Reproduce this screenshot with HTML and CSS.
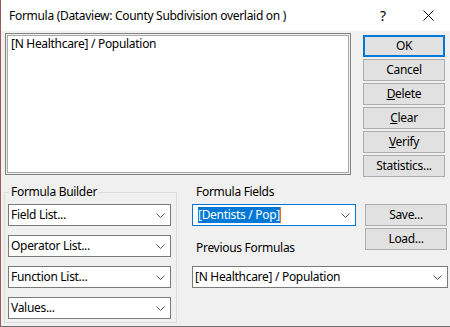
FILE: index.html
```html
<!DOCTYPE html>
<html lang="en">

<head>
    <meta charset="UTF-8">
    <title>Formula</title>
    <link rel="stylesheet" href="styles.css">
</head>

<body>
    <div id="window">
        <div id="titlebar">
            <div id="title">Formula (Dataview: County Subdivision overlaid on )</div>
            <div class="title-btn">?</div>
            <div class="title-btn close">
                <svg width="11" height="11" viewBox="0 0 11 11"><path d="M0.5 0.5 L10.5 10.5 M10.5 0.5 L0.5 10.5" stroke="#000" stroke-width="1"/></svg>
            </div>
        </div>

        <div id="top-row">
            <div id="formula-box">[N Healthcare] / Population</div>
            <div id="button-column">
                <div class="btn default">OK</div>
                <div class="btn">Cancel</div>
                <div class="btn"><u>D</u>elete</div>
                <div class="btn"><u>C</u>lear</div>
                <div class="btn"><u>V</u>erify</div>
                <div class="btn">Statistics...</div>
            </div>
        </div>

        <div id="bottom-row">
            <fieldset id="builder">
                <legend>Formula Builder</legend>
                <div class="combo">Field List...<svg class="chev" width="9" height="5" viewBox="0 0 9 5"><path d="M0.5 0.5 L4.5 4.5 L8.5 0.5" fill="none" stroke="#555" stroke-width="1"/></svg></div>
                <div class="combo">Operator List...<svg class="chev" width="9" height="5" viewBox="0 0 9 5"><path d="M0.5 0.5 L4.5 4.5 L8.5 0.5" fill="none" stroke="#555" stroke-width="1"/></svg></div>
                <div class="combo">Function List...<svg class="chev" width="9" height="5" viewBox="0 0 9 5"><path d="M0.5 0.5 L4.5 4.5 L8.5 0.5" fill="none" stroke="#555" stroke-width="1"/></svg></div>
                <div class="combo">Values...<svg class="chev" width="9" height="5" viewBox="0 0 9 5"><path d="M0.5 0.5 L4.5 4.5 L8.5 0.5" fill="none" stroke="#555" stroke-width="1"/></svg></div>
            </fieldset>

            <div id="fields-panel">
                <div id="fields-top">
                    <div id="fields-left">
                        <div class="label">Formula Fields</div>
                        <div class="combo focused"><span class="selected">[Dentists / Pop]</span><svg class="chev" width="9" height="5" viewBox="0 0 9 5"><path d="M0.5 0.5 L4.5 4.5 L8.5 0.5" fill="none" stroke="#555" stroke-width="1"/></svg></div>
                        <div class="label prev-label">Previous Formulas</div>
                    </div>
                    <div id="fields-buttons">
                        <div class="btn">Save...</div>
                        <div class="btn">Load...</div>
                    </div>
                </div>
                <div class="combo wide">[N Healthcare] / Population<svg class="chev" width="9" height="5" viewBox="0 0 9 5"><path d="M0.5 0.5 L4.5 4.5 L8.5 0.5" fill="none" stroke="#555" stroke-width="1"/></svg></div>
            </div>
        </div>
    </div>
</body>

</html>
```

FILE: styles.css
```css
body {
    margin: 0;
    padding: 0;
    font-family: 'Noto Sans', 'Liberation Sans', sans-serif;
    font-size: 12px;
    letter-spacing: -0.3px;
    color: #000;
}

#window {
    width: 449px;
    height: 326px;
    background-color: #f0f0f0;
    border-left: 1px solid #9a5a5a;
    border-bottom: 1px solid #6e6e6e;
}

#titlebar {
    height: 31px;
    background-color: #fff;
    display: flex;
    align-items: center;
}

#title {
    flex-grow: 1;
    padding-left: 8px;
    line-height: 16px;
}

.title-btn {
    width: 46px;
    height: 31px;
    display: flex;
    align-items: center;
    justify-content: center;
    font-size: 14px;
}

.close {
    width: 44px;
}

#top-row {
    display: flex;
    padding-top: 2px;
}

#formula-box {
    width: 334px;
    height: 134px;
    margin-left: 4px;
    padding: 2px 5px 4px 5px;
    line-height: 16px;
    background-color: #fff;
    border: 1px solid #828282;
    box-shadow: inset 0 0 0 1px #f0f0f0, inset 0 0 0 2px #a8a8a8;
}

#button-column {
    display: flex;
    flex-direction: column;
    gap: 2px;
    margin-left: 12px;
    margin-top: 2px;
}

.btn {
    width: 80px;
    height: 20px;
    line-height: 20px;
    text-align: center;
    background-color: #e1e1e1;
    border: 1px solid #adadad;
}

.btn.default {
    width: 78px;
    height: 18px;
    line-height: 18px;
    border: 2px solid #0078d7;
}

#bottom-row {
    display: flex;
    margin-top: 7px;
}

#builder {
    margin: 0 0 0 3px;
    width: 163px;
    padding: 4px 5px 3px 3px;
    border: 1px solid #dcdcdc;
    display: flex;
    flex-direction: column;
    gap: 9px;
}

#builder legend {
    padding: 0 2px;
    margin-left: 1px;
    line-height: 16px;
}

.combo {
    height: 20px;
    border: 1px solid #7a7a7a;
    background-color: #fff;
    display: flex;
    align-items: center;
    padding-left: 2px;
    padding-right: 5px;
    line-height: 16px;
}

.chev {
    margin-left: auto;
}

#fields-panel {
    margin-left: 15px;
    width: 256px;
}

#fields-top {
    display: flex;
}

#fields-left {
    width: 164px;
}

.label {
    line-height: 16px;
    padding-left: 4px;
}

#fields-left .combo {
    margin-top: 4px;
}

.combo.focused {
    border-color: #0078d7;
    padding-left: 5px;
}

.selected {
    background-color: #0078d7;
    color: #fff;
    border-right: 1px solid #e07020;
}

.prev-label {
    margin-top: 14px;
}

#fields-buttons {
    margin-left: 9px;
    margin-top: 20px;
    display: flex;
    flex-direction: column;
    gap: 2px;
}

.combo.wide {
    margin-top: 10px;
}
```
